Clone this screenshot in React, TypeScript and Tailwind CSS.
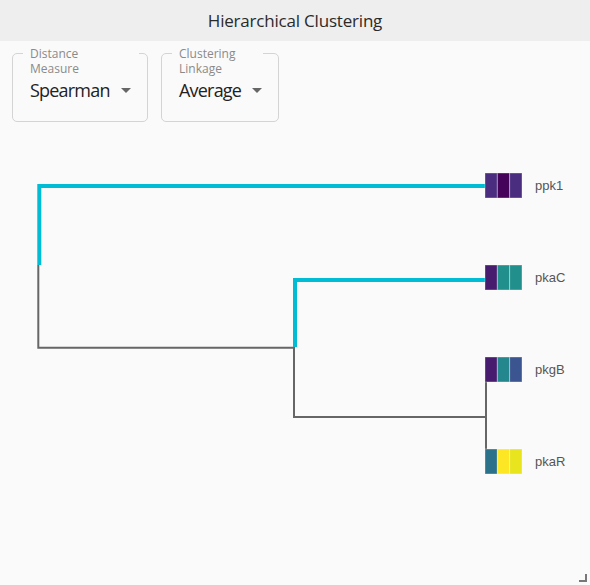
import React from 'react';

type Leaf = { name: string; y: number; cells: string[] };

const leaves: Leaf[] = [
  { name: 'ppk1', y: 173, cells: ['#4a2d7f', '#45035a', '#4a2d7f'] },
  { name: 'pkaC', y: 265, cells: ['#471c6e', '#21908c', '#21908c'] },
  { name: 'pkgB', y: 357, cells: ['#471c6e', '#23878d', '#3b5590'] },
  { name: 'pkaR', y: 449, cells: ['#2b7189', '#fde725', '#e8e41e'] },
];

const CYAN = '#00bcd4';
const GRAY = '#666666';

function SelectBox({ label, value, width, gapWidth }: { label: [string, string]; value: string; width: string; gapWidth: string }) {
  return (
    <div className={`relative h-[69px] rounded-[5px] border border-[#d4d4d4] ${width}`}>
      <div
        className={`absolute left-[10px] top-[-8px] bg-[#fafafa] px-[7px] text-[12px] leading-[15px] text-[#8a8a8a] ${gapWidth}`}
      >
        {label[0]}
        <br />
        {label[1]}
      </div>
      <div className="flex items-center gap-[11px] pl-[17px] pt-[25px] text-[18px] leading-[22px] tracking-[-0.8px] text-[#222]">
        <span>{value}</span>
        <svg width="10" height="5" viewBox="0 0 10 5">
          <path d="M0 0 L10 0 L5 5 Z" fill="#666" />
        </svg>
      </div>
    </div>
  );
}

export default function App() {
  return (
    <div
      className="relative h-[585px] w-[590px] overflow-hidden bg-[#fafafa]"
      style={{ fontFamily: '"Open Sans", "Noto Sans", sans-serif' }}
    >
      <div className="flex h-[41px] items-center justify-center bg-[#eeeeee] text-[17px] tracking-[-0.2px] text-[#2a2a2a]">
        Hierarchical Clustering
      </div>

      <div className="flex gap-[13px] px-[12px] pt-[12px]">
        <SelectBox label={['Distance', 'Measure']} value="Spearman" width="w-[136px]" gapWidth="w-[116px]" />
        <SelectBox label={['Clustering', 'Linkage']} value="Average" width="w-[118px]" gapWidth="w-[91px]" />
      </div>

      <svg width="590" height="463" viewBox="0 122 590 463" className="block">
        {/* gray links */}
        <g stroke={GRAY} strokeWidth="2" fill="none">
          <path d="M38.3 265 L38.3 347.7 L294 347.7" />
          <path d="M294 346 L294 417 L486 417" />
          <path d="M486 382 L486 449" />
        </g>
        {/* highlighted cyan links */}
        <g stroke={CYAN} strokeWidth="4" fill="none">
          <path d="M39.3 265 L39.3 186 L485 186" />
          <path d="M295 347 L295 280 L485 280" />
        </g>
        {leaves.map((leaf) => (
          <g key={leaf.name}>
            {leaf.cells.map((c, i) => (
              <rect
                key={i}
                x={485 + i * 12.33}
                y={leaf.y}
                width={12.33}
                height={25}
                fill={c}
                stroke="#ffffff"
                strokeOpacity="0.35"
                strokeWidth="1"
              />
            ))}
            <text
              x={535}
              y={leaf.y + 17}
              fontSize="13"
              fill="#555"
              style={{ fontFamily: '"Liberation Sans", Arial, sans-serif' }}
            >
              {leaf.name}
            </text>
          </g>
        ))}
      </svg>

      <svg className="absolute bottom-[3px] right-[3px]" width="8" height="8" viewBox="0 0 8 8">
        <path d="M7 0 L7 7 L0 7" stroke="#777" strokeWidth="2" fill="none" />
      </svg>
    </div>
  );
}
